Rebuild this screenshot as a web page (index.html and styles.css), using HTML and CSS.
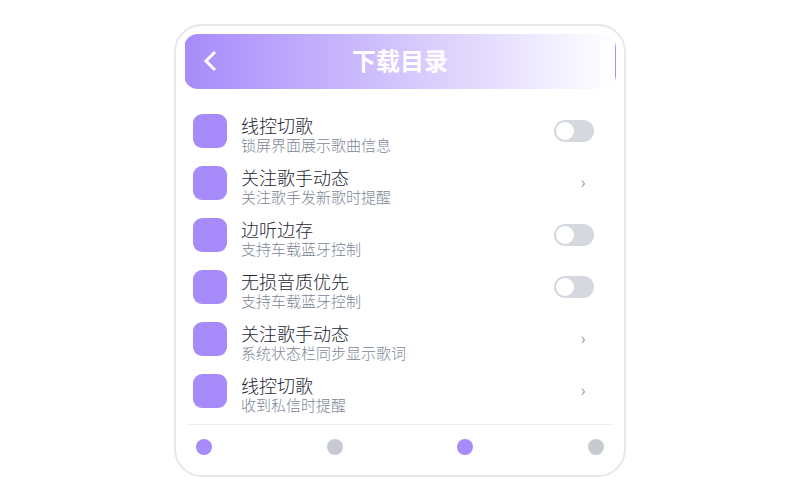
FILE: index.html
```
<!DOCTYPE html>
<html lang="zh-CN">
<head>
    <meta charset="UTF-8">
    <meta name="viewport" content="width=device-width, initial-scale=1.0">
    <title>下载目录</title>
    <link rel="stylesheet" href="styles.css">
</head>
<body>
    <main class="card">
        <header class="header">
            <button class="back" type="button" aria-label="返回">
                <svg width="14" height="22" viewBox="0 0 14 22" fill="none" stroke="currentColor" stroke-width="3">
                    <path d="M12 2 L3 11 L12 20"/>
                </svg>
            </button>
            <h1 class="title">下载目录</h1>
        </header>

        <ul class="list">
            <li class="row">
                <span class="icon"></span>
                <label class="text" for="wire">
                    <span class="name">线控切歌</span>
                    <span class="desc">锁屏界面展示歌曲信息</span>
                </label>
                <input class="switch" id="wire" type="checkbox">
            </li>
            <li class="row">
                <span class="icon"></span>
                <div class="text" id="follow">
                    <span class="name">关注歌手动态</span>
                    <span class="desc">关注歌手发新歌时提醒</span>
                </div>
                <button class="more" type="button" aria-labelledby="follow">›</button>
            </li>
            <li class="row">
                <span class="icon"></span>
                <label class="text" for="save">
                    <span class="name">边听边存</span>
                    <span class="desc">支持车载蓝牙控制</span>
                </label>
                <input class="switch" id="save" type="checkbox">
            </li>
            <li class="row">
                <span class="icon"></span>
                <label class="text" for="lossless">
                    <span class="name">无损音质优先</span>
                    <span class="desc">支持车载蓝牙控制</span>
                </label>
                <input class="switch" id="lossless" type="checkbox">
            </li>
            <li class="row">
                <span class="icon"></span>
                <div class="text" id="lyrics">
                    <span class="name">关注歌手动态</span>
                    <span class="desc">系统状态栏同步显示歌词</span>
                </div>
                <button class="more" type="button" aria-labelledby="lyrics">›</button>
            </li>
            <li class="row">
                <span class="icon"></span>
                <div class="text" id="message">
                    <span class="name">线控切歌</span>
                    <span class="desc">收到私信时提醒</span>
                </div>
                <button class="more" type="button" aria-labelledby="message">›</button>
            </li>
        </ul>

        <nav class="tabs">
            <button class="dot active" type="button" aria-label="1"></button>
            <button class="dot" type="button" aria-label="2"></button>
            <button class="dot active" type="button" aria-label="3"></button>
            <button class="dot" type="button" aria-label="4"></button>
        </nav>
    </main>
</body>
</html>
```

FILE: styles.css
```
* {
    box-sizing: border-box;
}
body {
    margin: 0;
    padding: 24px 16px;
    background-color: #fff;
    font-family: "Noto Sans CJK SC", sans-serif;
    font-weight: 300;
    color: #1f2937;
}
button {
    padding: 0;
    border: none;
    background: none;
    font: inherit;
    cursor: pointer;
}
.card {
    max-width: 452px;
    margin: 0 auto;
    padding: 8px;
    border: 2px solid #e5e7eb;
    border-radius: 28px;
}
.header {
    display: grid;
    grid-template-columns: 50px 1fr 50px;
    align-items: center;
    min-height: 55px;
    padding-bottom: 2px;
    border: 1px solid transparent;
    border-radius: 14px;
    background-image: linear-gradient(90deg, #a78bfa, #fff);
    color: #fff;
}
.back {
    display: flex;
    justify-content: center;
    color: #fff;
}
.title {
    margin: 0;
    padding-bottom: 2px;
    font-size: 24px;
    font-weight: 700;
    line-height: 32px;
    text-align: center;
}
.list {
    margin: 0;
    padding: 17px 22px 6px 9px;
    list-style: none;
}
.row {
    display: flex;
    align-items: flex-start;
    gap: 14px;
    padding: 8px 0 2px;
}
.icon {
    width: 34px;
    height: 34px;
    border-radius: 9px;
    background-color: #a78bfa;
}
.text {
    flex: 1;
    padding: 1px 0;
}
.name,
.desc {
    display: block;
    line-height: 20px;
}
.name {
    font-size: 18px;
}
.desc {
    font-size: 15px;
    color: #7d8695;
}
.switch {
    appearance: none;
    width: 40px;
    height: 22px;
    margin: 6px 0;
    padding: 2px;
    border-radius: 11px;
    background-color: #d5d8df;
    cursor: pointer;
}
.switch::before {
    content: "";
    display: block;
    width: 18px;
    height: 18px;
    border-radius: 50%;
    background-color: #fff;
}
.switch:checked {
    background-color: #a78bfa;
}
.switch:checked::before {
    margin-left: auto;
}
.more {
    width: 22px;
    height: 30px;
    font-size: 16px;
    color: #6b7280;
}
.tabs {
    display: flex;
    justify-content: space-between;
    margin: 0 2px;
    padding: 14px 10px 12px;
    border-top: 1px solid #eeeef1;
}
.dot {
    width: 16px;
    height: 16px;
    border-radius: 50%;
    background-color: #c7cbd1;
}
.dot.active {
    background-color: #a78bfa;
}
```
